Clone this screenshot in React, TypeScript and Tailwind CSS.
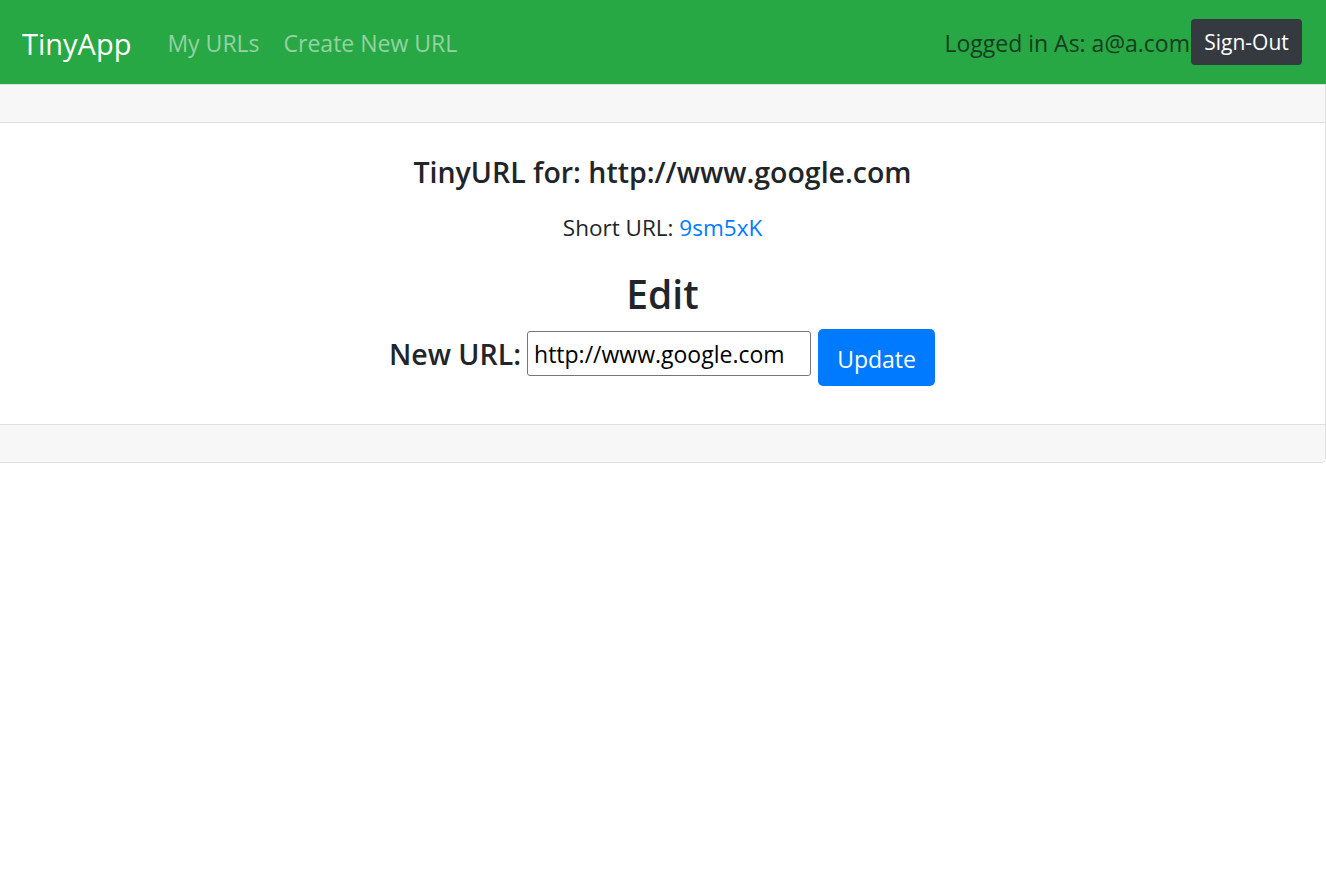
import React from "react";

export default function App() {
  const font = { fontFamily: '"Open Sans", "Noto Sans", sans-serif' };
  return (
    <div className="min-h-[875px] bg-white text-[#212529]" style={font}>
      <nav className="h-[84px] bg-[#28a745] flex items-center pl-[22px] pr-[24px]">
        <span className="mt-[2px] text-[29px] text-white leading-none">TinyApp</span>
        <span className="mt-[2px] ml-[36px] text-[23px] text-[#93d3a2] leading-none">My URLs</span>
        <span className="mt-[2px] ml-[24px] text-[23px] text-[#93d3a2] leading-none">Create New URL</span>
        <div className="ml-auto flex items-center">
          <span className="mt-[2px] text-[23px] text-[#173d20] leading-none">Logged in As: a@a.com</span>
          <button className="ml-[1px] h-[46px] w-[111px] rounded-[4px] bg-[#343a40] text-white text-[21px] leading-none">
            Sign-Out
          </button>
        </div>
      </nav>
      <div className="border border-[#dfdfdf] border-l-0 rounded-br-[5px] overflow-hidden">
        <div className="h-[38px] bg-[#f7f7f7] border-b border-[#dfdfdf]" />
        <div className="h-[301px] flex flex-col items-center">
          <h4 className="mt-[35px] text-[28.5px] font-semibold leading-none">TinyURL for: http://www.google.com</h4>
          <p className="mt-[30px] text-[22.5px] leading-none">
            Short URL: <a className="text-[#007bff]">9sm5xK</a>
          </p>
          <h2 className="mt-[35px] text-[39px] font-semibold leading-none">Edit</h2>
          <div className="mt-[16px] flex items-start pr-[1px]">
            <label className="mt-[11px] text-[28.5px] font-semibold leading-none mr-[6px]">New URL:</label>
            <input
              defaultValue="http://www.google.com"
              className="mt-[2px] w-[284px] h-[45px] border border-[#767676] rounded-[3px] px-[6px] text-[23px] text-black"
              style={font}
            />
            <button className="ml-[7px] w-[117px] h-[57px] rounded-[5px] bg-[#007bff] text-white text-[23px] pt-[3px]">
              Update
            </button>
          </div>
        </div>
        <div className="h-[38px] bg-[#f7f7f7] border-t border-[#dfdfdf]" />
      </div>
    </div>
  );
}
